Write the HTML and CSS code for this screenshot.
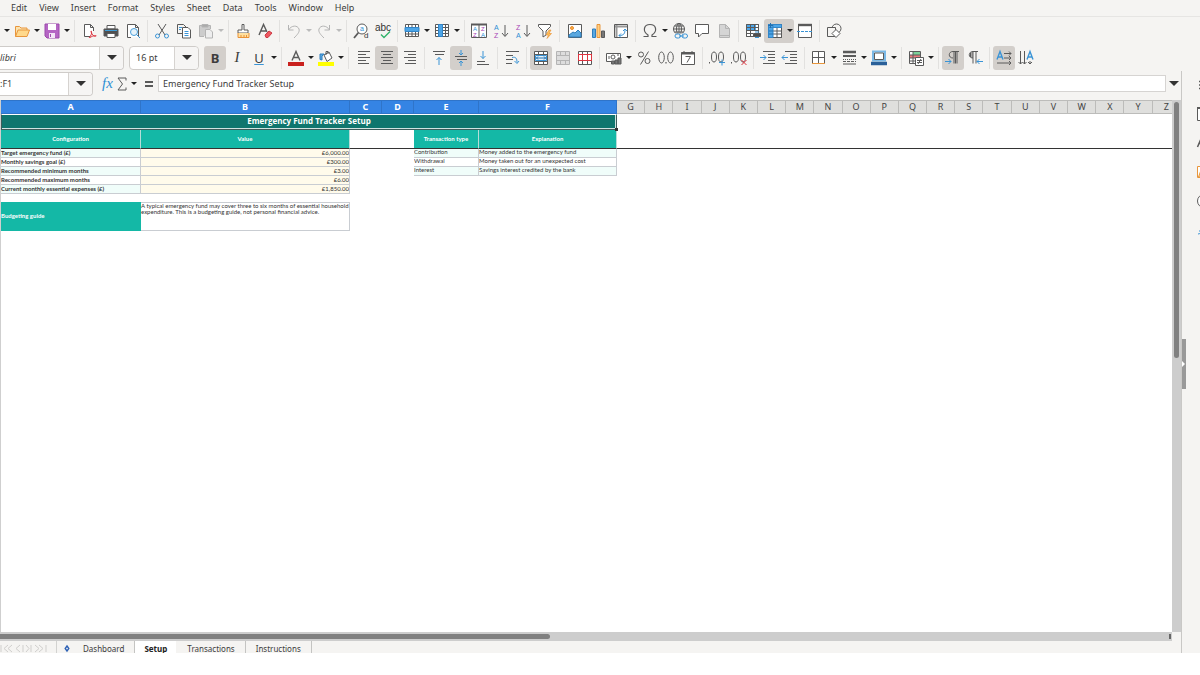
FILE: index.html
```
<!DOCTYPE html>
<html lang="en">
<head>
<meta charset="utf-8">
<title>Emergency Fund Tracker</title>
<link rel="stylesheet" href="styles.css">
</head>
<body>
<div class="app">
<nav class="menubar">
<button>Edit</button><button>View</button><button>Insert</button><button>Format</button><button>Styles</button><button>Sheet</button><button>Data</button><button>Tools</button><button>Window</button><button>Help</button>
</nav>

<div class="toolbar standard" role="toolbar" aria-label="Standard">
<div class="group">
<button class="caret" aria-label="New options"></button>
<button class="tool" aria-label="Open"><svg viewBox="0 0 16 16"><path d="M1.500 13.500V3.500h4l1.500 1.500h6v2" fill="#fbe3b0" stroke="#e8963c"/><path d="M1.500 13.500L4 7h11.500l-2.500 6.500z" fill="#ffd98c" stroke="#e8963c"/></svg></button><button class="caret" aria-label="Open options"></button>
<button class="tool" aria-label="Save"><svg viewBox="0 0 16 16"><path d="M1 1h14v14H3l-2-2z" fill="#b565c4" stroke="#9b4bab"/><path d="M4 1h8v6H4z" fill="#fff" stroke="none"/><path d="M5 10h6v5H5z" fill="#f3e4f6" stroke="none"/><path d="M6.500 11v3" stroke="#9b4bab"/></svg></button><button class="caret" aria-label="Save options"></button>
</div>
<div class="group">
<button class="tool" aria-label="Export as PDF"><svg viewBox="0 0 16 16"><path d="M9 13.500H3.500v-12h6l3 3V8M9.500 1.500v3h3" fill="#fff"/><path d="M8 15c2-2 3-5 2.500-6.500s-1 0 .5 2.500 3 2.500 4 2-2-1-6 1.500" stroke="#dc3540"/></svg></button>
<button class="tool" aria-label="Print"><svg viewBox="0 0 16 16"><path d="M4 2.500h8V6H4z" fill="#fff"/><path d="M1 6h14v7H1z" fill="#505050"/><path d="M2 7.500h12" stroke="#3f9dd8"/><path d="M4 10.500h8v4H4z" fill="#fff"/></svg></button>
<button class="tool" aria-label="Print preview"><svg viewBox="0 0 16 16"><path d="M6 14.500H2.500v-13h8l3 3V14M10.500 1.500v3h3" fill="#fff"/><circle cx="9" cy="9" r="3.500" stroke="#4aa0dc" fill="#e6f3fb"/><path d="M11.500 11.500L15 15" stroke="#3a8fcf"/></svg></button>
</div>
<div class="group">
<button class="tool" aria-label="Cut"><svg viewBox="0 0 16 16"><path d="M4 1l7 11M12 1L5 12"/><circle cx="3.500" cy="13" r="2" stroke="#3a94d6"/><circle cx="12.500" cy="13" r="2" stroke="#3a94d6"/></svg></button>
<button class="tool" aria-label="Copy"><svg viewBox="0 0 16 16"><path d="M6 10.500H1.500v-9h6L10 4"/><path d="M6.500 4.500H12l2.500 2.500v8h-8z" fill="#fff"/><path d="M8.500 8.500h4M8.500 10.500h4M8.500 12.500h4M3 4.500h3M3 6.500h2" stroke="#3a94d6"/></svg></button>
<button class="tool muted" aria-label="Paste"><svg viewBox="0 0 16 16"><path d="M6 13.500H1.500v-11h11V6" fill="#ccc"/><path d="M4 1.500h6V4H4z" fill="#aaa"/><path d="M7.500 6.500H12l2.500 2.500v6h-7z" fill="#eee"/></svg></button><button class="caret muted" aria-label="Paste options"></button>
</div>
<div class="group">
<button class="tool" aria-label="Clone formatting"><svg viewBox="0 0 16 16"><path d="M7 1.500h2V7h4v3H3V7h4z" fill="#fff"/><path d="M3 10v4.500h11V10M6 14v-2M9 14v-2M11.500 14v-2" fill="#ffe0a0" stroke="#ea9236"/></svg></button>
<button class="tool" aria-label="Clear formatting"><svg viewBox="0 0 16 16"><path d="M2 12L6.500 1.500 10 9M4 8h5" stroke-width="1.400"/><path d="M8 12l4-4 3 2-4 4.500H9z" fill="#ee5860" stroke="#cc3944"/></svg></button>
</div>
<div class="group">
<button class="tool muted" aria-label="Undo"><svg viewBox="0 0 16 16"><path d="M2.500 2v5h5M2.500 7c3-5 9-5 10.500-1 1 3-2 6-5 9"/></svg></button><button class="caret muted" aria-label="Undo list"></button>
<button class="tool muted" aria-label="Redo"><svg viewBox="0 0 16 16"><path d="M13.500 2v5h-5M13.500 7C10.500 2 4.500 2 3 6c-1 3 2 6 5 9"/></svg></button><button class="caret muted" aria-label="Redo list"></button>
</div>
<div class="group">
<button class="tool" aria-label="Find and replace"><svg viewBox="0 0 16 16"><circle cx="9" cy="6" r="5" fill="#fff"/><path d="M5.500 9.500L1 15" stroke-width="1.800"/><text x="7" y="8" class="t7 blue">a</text><text x="11" y="15" class="t8 dark">d</text></svg></button>
<button class="tool" aria-label="Spelling"><svg viewBox="0 0 16 16"><text x="0" y="7.500" class="t9 dark">abc</text><path d="M6 11.500l3 3 6-6" stroke="#31b36b" stroke-width="1.400"/></svg></button>
</div>
<div class="group">
<button class="tool" aria-label="Row"><svg viewBox="0 0 16 16"><path d="M1.500 1.500h13v12h-13z" fill="#fff"/><path d="M1.500 11h13M4.500 1.500v12M8 1.500v12M11.500 1.500v12"/><path d="M1 4.500h14v4H1z" fill="#4da6e8" stroke="#3285c8"/></svg></button><button class="caret" aria-label="Row options"></button>
<button class="tool" aria-label="Column"><svg viewBox="0 0 16 16"><path d="M1.500 1.500h13v12h-13z" fill="#fff"/><path d="M1.500 4.500h13M1.500 7.500h13M1.500 10.500h13M11.500 1.500v12"/><path d="M4.500 1.500h4v12h-4z" fill="#4da6e8" stroke="#3285c8"/></svg></button><button class="caret" aria-label="Column options"></button>
</div>
<div class="group">
<button class="tool" aria-label="Sort"><svg viewBox="0 0 16 16"><path d="M.5 1.500h15v13H.5zM8 2v12" fill="#fff"/><path d="M0 1.500h16" stroke-width="2"/><text x="2" y="7.500" class="t6 blue">A</text><text x="2" y="14" class="t6 purple">Z</text><text x="10" y="7.500" class="t6 purple">Z</text><text x="10" y="14" class="t6 blue">A</text></svg></button>
<button class="tool" aria-label="Sort ascending"><svg viewBox="0 0 16 16"><text x="1" y="7" class="t7 blue">A</text><text x="1" y="15" class="t7 purple">Z</text><path d="M12 2v11M9 10l3 3.500 3-3.500"/></svg></button>
<button class="tool" aria-label="Sort descending"><svg viewBox="0 0 16 16"><text x="1" y="7" class="t7 purple">Z</text><text x="1" y="15" class="t7 blue">A</text><path d="M12 2v11M9 10l3 3.500 3-3.500"/></svg></button>
<button class="tool" aria-label="AutoFilter"><svg viewBox="0 0 16 16"><path d="M1.500 1.500h12v2L9 8v4l-3 2V8L1.500 3.500z" fill="#fff"/><path d="M12 7l-3 5h2.500L10 15.500l4.500-5H12L14 7z" fill="#ffc15a" stroke="#e88c2c" stroke-width=".6"/></svg></button>
</div>
<div class="group roomy">
<button class="tool" aria-label="Insert image"><svg viewBox="0 0 16 16"><path d="M1.500 1.500h13v13h-13z" fill="#fff"/><circle cx="5" cy="5" r="1.500" fill="#fdb04a" stroke="#e88c2c"/><path d="M2 14v-2l4-3 2 1 3-3 3 3v4z" fill="#5aa8e0" stroke="#2f7fbd"/></svg></button>
<button class="tool" aria-label="Insert chart"><svg viewBox="0 0 16 16"><path d="M2.500 6h3v8.500h-3z" fill="#5aa8e0" stroke="#2e7fbf"/><path d="M7 1.500h3v13H7z" fill="#ffd083" stroke="#e8963c"/><path d="M11.500 8h3v6.500h-3z" fill="#777"/></svg></button>
<button class="tool" aria-label="Pivot table"><svg viewBox="0 0 16 16"><path d="M1.500 1.500h13v13h-13z" fill="#fff"/><path d="M2 3.500h12M3.500 2v12" stroke="#999" stroke-width="2"/><path d="M6 12.500c5 0 6-2 6-6M10 8l2-2 2 2M8 10.500l-2 2 2 2" stroke="#3a94d6"/></svg></button>
</div>
<div class="group">
<button class="tool" aria-label="Special character"><svg viewBox="0 0 16 16"><path d="M1.500 13.500H6V12C0 8 2 1.500 8 1.500S16 8 10 12v1.500h4.500" stroke-width="1.200"/></svg></button><button class="caret" aria-label="Recent characters"></button>
<button class="tool" aria-label="Hyperlink"><svg viewBox="0 0 16 16"><circle cx="7" cy="6" r="5.500"/><path d="M1.500 6h11M7 .5v11M2.500 3h9M2.500 9h9"/><ellipse cx="7" cy="6" rx="2.500" ry="5.500"/><path d="M3 10.500h12v5H3z" fill="#f5f4f2" stroke="none"/><rect x="3" y="11" width="5.500" height="4" rx="2" stroke="#3a94d6"/><rect x="10" y="11" width="5.500" height="4" rx="2" stroke="#3a94d6"/><path d="M7 13h5" stroke="#3a94d6"/></svg></button>
<button class="tool" aria-label="Comment"><svg viewBox="0 0 16 16"><path d="M1.500 1.500h13v9H8L4.500 14v-3.500h-3z" fill="#fff"/></svg></button>
<button class="tool muted" aria-label="Headers and footers"><svg viewBox="0 0 16 16"><path d="M3.500 1.500h6l4 4v9h-10z" fill="#d5d5d5"/><path d="M9.500 1.500v4h4M4 12.500h9"/></svg></button>
</div>
<div class="group">
<button class="tool" aria-label="Define print area"><svg viewBox="0 0 16 16"><path d="M1.500 1.500h12v12h-12z" fill="#fff"/><path d="M2 2h9v5.500H2z" fill="#4da6e8" stroke="none"/><path d="M1.500 1.500h12v12h-12zM1.500 4.500h12M1.500 7.500h12M1.500 10.500H8M5.500 1.500v12M9.500 1.500V8"/><path d="M8.500 10.500h7v3h-7z" fill="#505050"/><path d="M10 9h4M10 14.500h4" stroke="#3a94d6"/></svg></button>
<div class="split active"><button class="tool" aria-label="Freeze rows and columns" aria-pressed="true"><svg viewBox="0 0 16 16"><path d="M1.500 1.500h13v13h-13z" fill="#fff"/><path d="M6 8h8.500M6 11h8.500M10 4v10.500M1.500 1.500h13v13h-13z"/><path d="M1.500 1.500H6v13H1.500zM1.500 1.500h13v3h-13z" fill="#4da6e8" stroke="#3285c8"/><path d="M3.500 0v5M1 2.500h5M2 8h4M2 11h4" stroke="#2370b0"/></svg></button><button class="caret" aria-label="Freeze options"></button></div>
<button class="tool" aria-label="Split window"><svg viewBox="0 0 16 16"><path d="M1.500 2.500v12h13v-12" fill="#fff"/><path d="M1 2h14" stroke-width="2.400"/><path d="M0 8.500h16" stroke="#3a94d6" stroke-dasharray="3 1"/></svg></button>
</div>
<div class="group">
<button class="tool" aria-label="Show draw functions"><svg viewBox="0 0 16 16"><circle cx="10.500" cy="5.500" r="4.500"/><path d="M1.500 4.500h8v9h-8z" fill="#f5f4f2"/><path d="M10 6.500l4 4-4 4-4-4z" fill="#fff"/></svg></button>
</div>
</div>

<div class="toolbar formatting" role="toolbar" aria-label="Formatting">
<div class="combo font"><input class="italic" aria-label="Font name" value="libri"><button aria-label="Font list"><i class="arrow"></i></button></div>
<div class="combo size"><input aria-label="Font size" value="16 pt"><button aria-label="Size list"><i class="arrow"></i></button></div>
<div class="group first">
<button class="tool active letter bold" aria-pressed="true" aria-label="Bold">B</button>
<button class="tool letter slant" aria-label="Italic">I</button>
<button class="tool letter under" aria-label="Underline">U</button><button class="caret" aria-label="Underline options"></button>
</div>
<div class="group">
<button class="tool" aria-label="Font colour"><svg viewBox="0 0 16 16"><path d="M4 10.500L8 1.500l4 9M5.500 7.500h5" stroke-width="1.400"/><path d="M0 14h16" stroke="#c9211e" stroke-width="4"/></svg></button><button class="caret" aria-label="Font colours"></button>
<button class="tool" aria-label="Highlighting colour"><svg viewBox="0 0 16 16"><path d="M6 5l5-3 3 6-5 3.500z" fill="#fff"/><path d="M8 5V1.500h2V4"/><path d="M2 9.500V4h4l-2 2v4z" fill="#5aa8e0" stroke="#2e7fbf"/><path d="M0 14h16" stroke="#ff0" stroke-width="4"/></svg></button><button class="caret" aria-label="Highlighting colours"></button>
</div>
<div class="group roomy">
<button class="tool" aria-label="Align left"><svg viewBox="0 0 16 16"><path d="M2 1.500h12M2 4.500h8M2 7.500h12M2 10.500h8M2 13.500h11"/></svg></button>
<button class="tool active" aria-pressed="true" aria-label="Centre"><svg viewBox="0 0 16 16"><path d="M2 1.500h12M4 4.500h8M2 7.500h12M4 10.500h8M2 13.500h12"/></svg></button>
<button class="tool" aria-label="Align right"><svg viewBox="0 0 16 16"><path d="M2 1.500h12M6 4.500h8M2 7.500h12M6 10.500h8M3 13.500h11"/></svg></button>
</div>
<div class="group">
<button class="tool" aria-label="Align top"><svg viewBox="0 0 16 16"><path d="M2 1.500h12M4 4.500h9"/><path d="M8 15V7.500M5.500 10L8 7.500l2.500 2.500" stroke="#3a94d6"/></svg></button>
<button class="tool active" aria-pressed="true" aria-label="Centre vertically"><svg viewBox="0 0 16 16"><path d="M2 6.500h12M4 9.500h10"/><path d="M8 0v5M6 3l2 2 2-2M8 16v-5M6 13l2-2 2 2" stroke="#3a94d6"/></svg></button>
<button class="tool" aria-label="Align bottom"><svg viewBox="0 0 16 16"><path d="M2 11.500h8M2 14.500h12"/><path d="M8 1v7.500M5.500 6L8 8.500 10.500 6" stroke="#3a94d6"/></svg></button>
</div>
<div class="group">
<button class="tool" aria-label="Wrap text"><svg viewBox="0 0 16 16"><path d="M2 1.500h13M2 5.500h7M2 9.500h7M2 13.500h6"/><path d="M8 7.500c4-1 5 1 5 5M10.500 11l2.500 2.500 2-2.500" stroke="#3a94d6"/></svg></button>
</div>
<div class="group">
<button class="tool active" aria-pressed="true" aria-label="Merge and centre"><svg viewBox="0 0 16 16"><path d="M1.500 1.500h13v13h-13zM1.500 4.500h13M1.500 11.500h13M5.500 1.500v3M10.500 1.500v3M5.500 11.500v3M10.500 11.500v3" fill="#fff"/><path d="M2.500 5.500h11v5h-11z" fill="#e5f3fd" stroke="#3a94d6"/><path d="M3 8h10M5 6.500L3.500 8 5 9.500M11 6.500L12.500 8 11 9.500" stroke="#2370b0"/></svg></button>
<button class="tool muted" aria-label="Unmerge cells"><svg viewBox="0 0 16 16"><path d="M1.500 1.500h13v13h-13z" fill="#ddd"/><path d="M1.500 5.500h13M1.500 10.500h13M5.500 1.500v4M10.500 1.500v4M5.500 10.500v4M10.500 10.500v4"/></svg></button>
<button class="tool" aria-label="Split cells"><svg viewBox="0 0 16 16"><path d="M1.500 1.500h13v13h-13z" fill="#fff"/><path d="M5.500 1.500v3M10.500 1.500v3M5.500 11v3M10.500 11v3"/><path d="M1.500 4.500h13M1.500 10.500h13M5.500 5v5M10.500 5v5M1.500 4v7M14.500 4v7" stroke="#dc3540"/></svg></button>
</div>
<div class="group">
<button class="tool" aria-label="Currency"><svg viewBox="0 0 16 16"><path d="M7 11.500H.5v-8h14V8" fill="#fff"/><circle cx="7" cy="7" r="2"/><path d="M3 6v3M11 5h2"/><path d="M5.500 11h3v3h-3zM9 10h3v4H9zM12 8h3v6h-3z" fill="#777"/></svg></button><button class="caret" aria-label="Currency options"></button>
<button class="tool" aria-label="Percent"><svg viewBox="0 0 16 16"><circle cx="5" cy="4.500" r="2.500"/><circle cx="11.500" cy="11" r="2.500"/><path d="M12.500 1.500l-8 13"/></svg></button>
<button class="tool" aria-label="Number"><svg viewBox="0 0 16 16"><ellipse cx="3.500" cy="7.500" rx="2.800" ry="5.500"/><ellipse cx="12.500" cy="7.500" rx="2.800" ry="5.500"/><path d="M8 12v1.500" stroke-width="1.200"/></svg></button>
<button class="tool" aria-label="Date"><svg viewBox="0 0 16 16"><path d="M1.500 2.500h13v12h-13z" fill="#fff"/><path d="M1 3.500h14" stroke-width="2"/><path d="M4 1v2M12 1v2M5.500 6.500h5l-3.500 6"/></svg></button>
</div>
<div class="group">
<button class="tool" aria-label="Add decimal place"><svg viewBox="0 0 16 16"><ellipse cx="5" cy="7" rx="2.500" ry="5"/><ellipse cx="12" cy="7" rx="2.500" ry="5"/><path d="M.5 12v1.500"/><path d="M13 9.500v6M10 12.500h6" stroke="#3a94d6"/></svg></button>
<button class="tool" aria-label="Delete decimal place"><svg viewBox="0 0 16 16"><ellipse cx="5" cy="7" rx="2.500" ry="5"/><ellipse cx="12" cy="7" rx="2.500" ry="5"/><path d="M.5 12v1.500"/><path d="M10.500 10l5 5M15.500 10l-5 5" stroke="#dc3540"/></svg></button>
</div>
<div class="group">
<button class="tool" aria-label="Increase indent"><svg viewBox="0 0 16 16"><path d="M3 1.500h12M8 4.500h7M8 7.500h7M8 10.500h7M3 13.500h12"/><path d="M0 7.500h6M3.500 5L6 7.500 3.500 10" stroke="#3a94d6"/></svg></button>
<button class="tool" aria-label="Decrease indent"><svg viewBox="0 0 16 16"><path d="M3 1.500h12M8 4.500h7M8 7.500h7M8 10.500h7M3 13.500h12"/><path d="M0 7.500h6M2.500 5L0 7.500 2.500 10" stroke="#3a94d6"/></svg></button>
</div>
<div class="group">
<button class="tool" aria-label="Borders"><svg viewBox="0 0 16 16"><path d="M1.500 1.500h12v12h-12zM7.500 1.500v12M1.500 7.500h12" fill="#fff"/><path d="M1 13.500h13" stroke="#e8963c"/></svg></button><button class="caret" aria-label="Border options"></button>
<button class="tool" aria-label="Border style"><svg viewBox="0 0 16 16"><path d="M2 2h13" stroke-width="2.500"/><path d="M2 6h13" stroke-width="2"/><path d="M2 9.500h13" stroke-dasharray="1 1"/><path d="M2 11.500h13" stroke-dasharray="3 1"/><path d="M2 14h13"/></svg></button><button class="caret" aria-label="Border styles"></button>
<button class="tool" aria-label="Border colour"><svg viewBox="0 0 16 16"><path d="M2 1.500h12v9H2z" fill="#fff" stroke="#7ab8e6" stroke-width="2"/><path d="M3.500 3h9v6.500h-9z"/><path d="M0 13.500h16" stroke="#2a6099" stroke-width="3.500"/></svg></button><button class="caret" aria-label="Border colours"></button>
</div>
<div class="group">
<button class="tool" aria-label="Conditional formatting"><svg viewBox="0 0 16 16"><path d="M1.500 1.500h11v12h-11z" fill="#fff"/><path d="M5 2h7v3H5z" fill="#7ccf98" stroke="none"/><path d="M2 5h10v3H2z" fill="#ee7b7f" stroke="none"/><path d="M1.500 5h11M1.500 8h11M1.500 11h6M5 1.500v12"/><path d="M7.500 7.500h8v8h-8z" fill="#fff"/><path d="M9 10.500h5M9 12.500h5M13 9l-3 5"/></svg></button><button class="caret" aria-label="Conditional options"></button>
</div>
<div class="group">
<button class="tool active" aria-pressed="true" aria-label="Left to right"><svg viewBox="0 0 16 16"><path d="M14 1.500H8C3 1.500 3 8 8 8M9 1.500v12M12 1.500v12M10.500 1.500v12"/><path d="M0 11.500h6M3.500 9L6 11.500 3.500 14" stroke="#3a94d6"/></svg></button>
<button class="tool" aria-label="Right to left"><svg viewBox="0 0 16 16"><path d="M11 1.500H6C1 1.500 1 8 6 8V1.500M6 8v5.500M9 1.500v12M5 2v6M3.500 3v4"/><path d="M10 11.500h6M12.500 9L10 11.500l2.500 2.500" stroke="#3a94d6"/></svg></button>
</div>
<div class="group">
<button class="tool active" aria-pressed="true" aria-label="Text direction left to right"><svg viewBox="0 0 16 16"><path d="M1 9.500l3-8 3 8M2 7h4" stroke="#3a94d6" stroke-width="1.400"/><path d="M8 3.500h7M8 8h7M1 13h14M13 1.500l2 2-2 2M13 6l2 2-2 2M13 11l2 2-2 2"/></svg></button>
<button class="tool" aria-label="Text direction top to bottom"><svg viewBox="0 0 16 16"><path d="M9 9.500l3-8 3 8M10 7h4" stroke="#3a94d6" stroke-width="1.400"/><path d="M2.500 1v13M6.500 1v13M12 11v3M.5 12l2 2 2-2M4.500 12l2 2 2-2M10 12l2 2 2-2"/></svg></button>
</div>
</div>

<div class="workspace">
<main class="document">
<div class="formulabar">
<div class="combo name"><input aria-label="Name box" value=":F1"><button aria-label="Named ranges"><i class="arrow"></i></button></div>
<div class="functions">
<button class="fx" aria-label="Function wizard">fx</button>
<button class="sigma" aria-label="Select function"><svg viewBox="0 0 10 14"><path d="M9 3.500V1H1l4.500 6L1 13h8v-2.500"/></svg></button>
<button class="caret" aria-label="Function list"></button>
<button class="equals" aria-label="Formula"><svg viewBox="0 0 10 14"><path d="M1 5h8M1 9h8" stroke-width="2"/></svg></button>
</div>
<input class="formula" aria-label="Input line" value="Emergency Fund Tracker Setup">
<button class="expand" aria-label="Expand formula bar"><i class="arrow"></i></button>
</div>

<div class="gridarea">
<div class="sheet">
<table>
<colgroup><col class="ca"><col class="cb"><col class="cc"><col class="cc"><col class="ce"><col class="cf"><col span="20"></colgroup>
<thead>
<tr class="letters"><th class="sel">A</th><th class="sel">B</th><th class="sel">C</th><th class="sel">D</th><th class="sel">E</th><th class="sel">F</th><th>G</th><th>H</th><th>I</th><th>J</th><th>K</th><th>L</th><th>M</th><th>N</th><th>O</th><th>P</th><th>Q</th><th>R</th><th>S</th><th>T</th><th>U</th><th>V</th><th>W</th><th>X</th><th>Y</th><th>Z</th></tr>
</thead>
<tbody>
<tr class="title"><td colspan="6" class="selected">Emergency Fund Tracker Setup<span class="handle"></span></td><td colspan="20"></td></tr>
<tr class="heads"><th>Configuration</th><th>Value</th><td colspan="2"></td><th>Transaction type</th><th>Explanation</th><td colspan="20"></td></tr>
<tr class="row"><td class="label mint">Target emergency fund (£)</td><td class="amount">£6,000.00</td><td colspan="2"></td><td class="note mint">Contribution</td><td class="note mint">Money added to the emergency fund</td><td colspan="20"></td></tr>
<tr class="row"><td class="label">Monthly savings goal (£)</td><td class="amount">£300.00</td><td colspan="2"></td><td class="note">Withdrawal</td><td class="note">Money taken out for an unexpected cost</td><td colspan="20"></td></tr>
<tr class="row"><td class="label mint">Recommended minimum months</td><td class="amount">£3.00</td><td colspan="2"></td><td class="note mint">Interest</td><td class="note mint">Savings interest credited by the bank</td><td colspan="20"></td></tr>
<tr class="row"><td class="label">Recommended maximum months</td><td class="amount">£6.00</td><td colspan="24"></td></tr>
<tr class="row"><td class="label mint">Current monthly essential expenses (£)</td><td class="amount">£1,850.00</td><td colspan="24"></td></tr>
<tr class="gap"><td colspan="26"></td></tr>
<tr class="guide"><th>Budgeting guide</th><td class="guidetext">A typical emergency fund may cover three to six months of essential household expenditure. This is a budgeting guide, not personal financial advice.</td><td colspan="24"></td></tr>
</tbody>
</table>
</div>
<div class="vscroll"><div class="vthumb"></div></div>
<div class="hscroll"><div class="hthumb"></div><div class="hmark"></div></div>
</div>

<div class="tabs">
<div class="navs"><svg viewBox="0 0 48 12"><path d="M1 4v7M8 4L4 7.500 8 11M12 4L8 7.500l4 3.500M20 4l-4 3.500 4 3.500M23 4v7M26 4l3 3.500-3 3.500M31 4v7M35 4l4 3.500-4 3.500M39 4l4 3.500-4 3.500M46 4v7"/></svg></div>
<button class="add" aria-label="Add sheet"><svg viewBox="0 0 8 10"><path d="M4 3l1.800 2.500L4 8 2.200 5.500z" fill="#fff" stroke="#2f62b5" stroke-width="1.400"/></svg></button>
<button class="tab">Dashboard</button><button class="tab current">Setup</button><button class="tab">Transactions</button><button class="tab">Instructions</button>
</div>
</main>

<aside class="sidebar">
<button aria-label="Sidebar settings"><svg viewBox="0 0 16 16"><path d="M2 4.500h12M2 8h12M2 11.500h12" stroke-width="1.600"/></svg></button>
<button aria-label="Properties"><svg viewBox="0 0 16 16"><path d="M.5 1.500h14v13H.5z" fill="#fff"/><path d="M0 2h15" stroke-width="2"/><path d="M3 6.500h8M3 9.500h8"/></svg></button>
<button aria-label="Styles"><svg viewBox="0 0 16 16"><path d="M.5 12L5 1.500 9 12M2 8.500h6" stroke-width="1.500"/><path d="M3 14.500h8"/></svg></button>
<button aria-label="Gallery"><svg viewBox="0 0 16 16"><path d="M.5 2.500h14v11H.5z" fill="#fff" stroke="#e8963c"/><path d="M1.500 13L4 6h10v7z" fill="#ffd98c" stroke="#e8963c"/></svg></button>
<button aria-label="Navigator"><svg viewBox="0 0 16 16"><circle cx="7" cy="8" r="6.500" fill="#fff"/><path d="M4 11l2-4 4-2-2 4z"/></svg></button>
<button aria-label="Functions"><svg viewBox="0 0 16 16"><path d="M1 12c3 0 3-2 4-5s2-4 4-4M2 9h6" stroke="#3a94d6"/></svg></button>
<div class="grip"><i></i></div>
</aside>
</div>
</div>
</body>
</html>
```
FILE: styles.css
```
* { box-sizing: border-box; }
body {
  margin: 0;
  background: #fff;
  color: #3c3c3c;
  font-family: "Noto Sans", sans-serif;
  font-size: 9px;
}
button, input { font: inherit; color: inherit; margin: 0; padding: 0; border: 0; background: none; min-width: 0; }
svg { display: block; overflow: visible; fill: none; stroke: #5a5a5a; stroke-width: 1; }
svg text { stroke: none; font-family: "Liberation Sans", sans-serif; }
.t6 { font-size: 6px; }
.t7 { font-size: 7px; }
.t8 { font-size: 8px; }
.t9 { font-size: 10px; }
.blue { fill: #2f8fd4; }
.purple { fill: #a743b5; }
.dark { fill: #333; }

.app {
  display: flex;
  flex-direction: column;
  height: 100vh;
  padding-bottom: 22px;
  overflow: hidden;
}
.app > * { background: #f5f4f2; }

.menubar {
  display: flex;
  gap: 12px;
  height: 17px;
  padding-left: 11px;
  border-bottom: 1px solid #e6e5e3;
  line-height: 16px;
}

.toolbar { display: flex; align-items: center; height: 27px; flex: none; }
.group { display: flex; align-items: center; }
.group + .group::before {
  content: "";
  flex: none;
  width: 1px;
  height: 22px;
  margin: 0 3px;
  background: #e2e1df;
}
.tool {
  display: flex;
  align-items: center;
  justify-content: center;
  width: 22px;
  height: 24px;
  border-radius: 3px;
}
.roomy .tool { width: 23px; }
.tool svg { width: 16px; height: 16px; }
.tool.active, .split.active { background: #d3cfcb; }
.split { display: flex; border-radius: 3px; }
.muted svg { stroke: #b4b4b4; }
.caret { display: flex; align-items: center; justify-content: center; width: 8px; height: 24px; }
.caret::after {
  content: "";
  border: 3px solid transparent;
  border-top-color: #222;
  border-bottom: 0;
}
.caret.muted::after { border-top-color: #bbb; }
.standard { padding-left: 3px; }
.letter { font-size: 13px; }
.bold { font-weight: 700; }
.slant { font-family: "Liberation Serif", serif; font-style: italic; font-size: 15px; }
.under { text-decoration: underline; text-decoration-color: #3a94d6; }

.arrow { border: 5px solid transparent; border-top-color: #333; border-bottom: 0; }
.combo {
  display: flex;
  height: 24px;
  background: #fff;
  border: 1px solid #cfccc9;
  border-radius: 4px;
}
.combo input { flex: 1; }
.combo button {
  display: flex;
  align-items: center;
  justify-content: center;
  width: 24px;
  border-left: 1px solid #d6d3d0;
  border-radius: 0 4px 4px 0;
  background: #f6f5f4;
}
.font, .name { border-left: 0; border-radius: 0 4px 4px 0; }
.font { width: 124px; margin-right: 5px; }
.size { width: 70px; }
.size input { padding-left: 6px; }
.italic { font-style: italic; }
.first { margin-left: 5px; }

.workspace { display: flex; flex: 1; min-height: 0; }
.document { display: flex; flex-direction: column; flex: 1; min-width: 0; border-right: 1px solid #c9c8c6; }
.formulabar { display: flex; align-items: center; height: 29px; padding-bottom: 4px; flex: none; }
.name { width: 93px; }
.functions { display: flex; align-items: center; gap: 3px; padding: 0 4px 0 8px; }
.fx { width: 13px; font-family: "Liberation Serif", serif; font-style: italic; font-size: 15px; color: #2f8fd4; }
.sigma svg, .equals svg { width: 10px; height: 14px; }
.equals { margin-left: 3px; }
.formula { flex: 1; height: 17px; padding-left: 4px; border: 1px solid #d6d4d2; background: #fff; }
.expand { display: flex; justify-content: center; width: 15px; }

.gridarea {
  display: grid;
  grid-template-columns: 1fr 9px;
  grid-template-rows: 1fr 9px;
  flex: 1;
  min-height: 0;
}
.sheet { overflow: hidden; background: #fff; border-left: 1px solid #cfcfcf; }
table {
  width: calc(100% + 9px);
  table-layout: fixed;
  border-collapse: separate;
  border-spacing: 0;
  font-family: Lato, sans-serif;
  font-size: 6px;
  line-height: 7px;
  color: #333;
}
.ca { width: 140px; }
.cb { width: 209px; }
.cc { width: 32px; }
.ce { width: 65px; }
.cf { width: 138px; }
th, td { padding: 0; overflow: hidden; white-space: nowrap; }
.letters th {
  height: 14px;
  background: #dfdfdd;
  border: 1px solid #bcbcba;
  border-left: 0;
  font-family: "Noto Sans", sans-serif;
  font-size: 9px;
  line-height: 12px;
  font-weight: 400;
  color: #444;
}
.letters .sel { background: #3584e4; border-color: #2f74c9; color: #fff; font-weight: 700; }
.title td { height: 16px; }
.title .selected {
  position: relative;
  overflow: visible;
  padding-bottom: 2px;
  background: #0f766e;
  color: #fff;
  border: 1px solid #3d5c5a;
  border-top-color: #fff;
  box-shadow: inset 0 -1px 0 0 #cfe3e1, inset -1px 0 0 0 #cfe3e1;
  font-family: "Open Sans", sans-serif;
  font-size: 8px;
  line-height: 12px;
  font-weight: 700;
  text-align: center;
}
.handle { position: absolute; right: -2px; bottom: -2px; width: 3px; height: 3px; background: #333; }
.heads th, .heads td { height: 19px; padding-bottom: 2px; border-bottom: 1px solid #333; }
.heads th, .guide th { background: #14b8a6; color: #fff; }
.heads th { border-right: 1px solid #b5ddd8; }
.row td { height: 9px; }
.gap td { height: 8px; }
.label, .amount, .note { border-right: 1px solid #c9cdd2; border-bottom: 1px solid #c9cdd2; }
.label { font-weight: 700; vertical-align: top; }
.mint { background: #f0fdfa; }
.amount { background: #fffbeb; text-align: right; vertical-align: top; }
.note { vertical-align: top; line-height: 6px; }
.guide th, .guide td { height: 29px; }
.guide th { padding-bottom: 2px; text-align: left; }
.guide .guidetext { border: 1px solid #c9cdd2; border-left: 0; white-space: normal; vertical-align: top; line-height: 6px; }

.vscroll { padding: 2px; background: #cdcdcd; }
.vthumb { height: 256px; border-radius: 3px; background: #808080; }
.vthumb { height: 48.5%; }
.hscroll { display: flex; justify-content: space-between; padding: 2px 1px 2px 0; background: #cdcdcd; }
.hthumb { width: 47%; border-radius: 0 3px 3px 0; background: #808080; }
.hmark { width: 2px; background: #666; }

.tabs { display: flex; height: 12px; overflow: hidden; flex: none; font-size: 8px; }
.navs { width: 57px; border-right: 1px solid #d2d2d0; }
.navs svg { width: 48px; height: 12px; stroke: #d0cfcd; }
.add { padding: 2px 6px 0; }
.add svg { width: 8px; height: 10px; }
.tab { display: flex; align-items: center; height: 15px; padding: 0 10px; border-right: 1px solid #c4c4c2; }
.add + .tab { padding-left: 6px; }
.tab.current { padding: 0 9px; background: #fff; border-color: #f5f4f2; font-weight: 700; color: #222; }

.sidebar { position: relative; display: flex; flex-direction: column; gap: 13px; width: 18px; padding: 6px 0 0 15px; overflow: hidden; }
.sidebar button { width: 16px; height: 16px; flex: none; }
.sidebar svg { width: 16px; height: 16px; }
.grip {
  position: absolute;
  left: 0;
  top: 46%;
  display: flex;
  align-items: center;
  width: 4px;
  height: 50px;
  background: #999;
}
.grip i { border: 3px solid transparent; border-left-color: #fff; border-right: 0; }
```
